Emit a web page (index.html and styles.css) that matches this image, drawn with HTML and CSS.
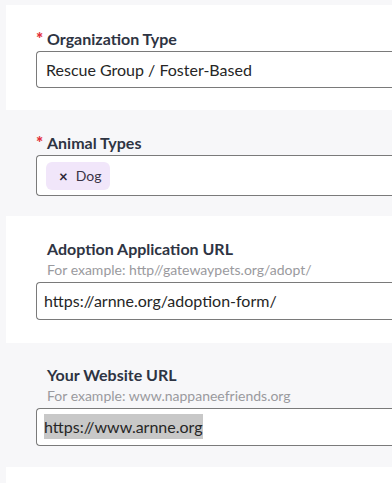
FILE: index.html
```html
<!DOCTYPE html>
<html lang="en">
<head>
    <meta charset="UTF-8">
    <meta name="viewport" content="width=device-width, initial-scale=1.0">
    <title>Organization Details</title>
    <link rel="stylesheet" href="styles.css">
</head>
<body>

    <div class="form">
        <div class="row row-white first">
            <label class="label"><span class="req">*</span>Organization Type</label>
            <div class="field select-field">Rescue Group / Foster-Based</div>
        </div>

        <div class="row row-gray">
            <label class="label"><span class="req">*</span>Animal Types</label>
            <div class="field tag-field">
                <span class="chip"><span class="chip-x">&times;</span>Dog</span>
            </div>
        </div>

        <div class="row row-white">
            <label class="label plain">Adoption Application URL</label>
            <div class="hint">For example: http//gatewaypets.org/adopt/</div>
            <div class="field url-field">https://arnne.org/adoption-form/</div>
        </div>

        <div class="row row-gray">
            <label class="label plain">Your Website URL</label>
            <div class="hint">For example: www.nappaneefriends.org</div>
            <div class="field url-field"><span class="selected">https://www.arnne.org</span></div>
        </div>

        <div class="row row-white last"></div>
    </div>

</body>
</html>
```

FILE: styles.css
```css
body {
    margin: 0;
    padding: 0;
    background: #f7f7f9;
    font-family: 'Lato', 'Noto Sans', sans-serif;
    color: #2e3443;
    overflow: hidden;
}
.form {
    padding-top: 5px;
    padding-left: 6px;
    display: flex;
    flex-direction: column;
}
.row {
    display: flex;
    flex-direction: column;
    padding: 24px 0 22px 30px;
}
.row-white {
    background: #ffffff;
}
.row-gray {
    background: #f7f7f9;
    padding-bottom: 20px;
}
.first {
    padding-top: 25px;
}
.row-gray:nth-child(4) {
    padding-top: 23px;
    padding-bottom: 21px;
}
.row-white:nth-child(3) {
    padding-bottom: 23px;
}
.last {
    height: 18px;
    padding: 0;
}
.label {
    display: flex;
    align-items: center;
    font-size: 16px;
    font-weight: bold;
    line-height: 18px;
    margin-bottom: 3px;
    color: #2e3443;
}
.label.plain {
    padding-left: 11px;
    margin-bottom: 3px;
}
.req {
    color: #e3303c;
    width: 11px;
    font-size: 17px;
    font-weight: 900;
}
.hint {
    font-size: 14px;
    color: #9a9a9e;
    padding-left: 11px;
    line-height: 18px;
    margin-bottom: 3px;
}
.field {
    background: #ffffff;
    border: 1px solid #7a7a7a;
    border-right: none;
    border-radius: 4px 0 0 4px;
    box-sizing: border-box;
}
.select-field {
    height: 37px;
    line-height: 35px;
    padding-left: 9px;
    font-size: 16px;
    color: #262626;
}
.tag-field {
    height: 41px;
    display: flex;
    align-items: center;
    padding-left: 9px;
}
.chip {
    display: flex;
    align-items: center;
    background: #f1e6fa;
    border-radius: 6px;
    height: 28px;
    padding: 0 9px 0 13px;
    font-size: 14px;
    color: #3a3347;
}
.chip-x {
    font-weight: bold;
    font-size: 15px;
    margin-right: 8px;
    color: #2b2535;
}
.url-field {
    height: 38px;
    line-height: 36px;
    padding-left: 7px;
    font-size: 16px;
    color: #262626;
}
.selected {
    background: #c8c8c8;
    padding: 3px 0;
}
```
